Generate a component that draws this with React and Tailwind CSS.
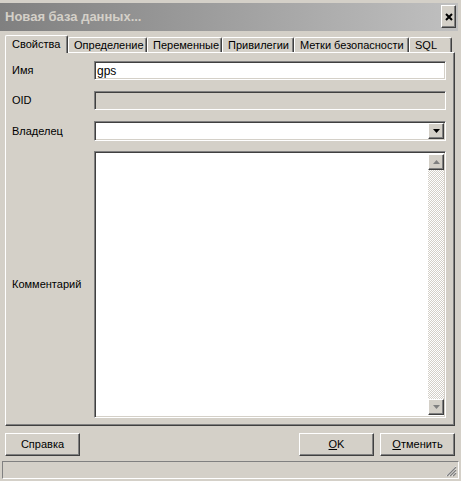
import React from 'react';

const raised =
  'border border-t-white border-l-white border-r-[#404040] border-b-[#404040] shadow-[inset_-1px_-1px_0_#808080]';
const sunken =
  'border border-t-[#808080] border-l-[#808080] border-r-white border-b-white shadow-[inset_1px_1px_0_#404040,inset_-1px_-1px_0_#d4d0c8]';

const tabs = [
  { label: 'Свойства', w: 'w-[63px]', active: true },
  { label: 'Определение', w: 'w-[79px]' },
  { label: 'Переменные', w: 'w-[75px]' },
  { label: 'Привилегии', w: 'w-[72px]' },
  { label: 'Метки безопасности', w: 'w-[115px]' },
  { label: 'SQL', w: 'w-[43px]' },
];

function Tab({ label, w, active }) {
  if (active) {
    return (
      <div
        className={`${w} h-[18px] -mb-px relative z-10 bg-[#d4d0c8] rounded-tl-[2px] rounded-tr-[2px] border-t border-l border-t-white border-l-white border-r border-r-[#404040] shadow-[inset_-1px_0_0_#808080] flex items-center pl-[6px] pb-[1px]`}
      >
        {label}
      </div>
    );
  }
  return (
    <div
      className={`${w} h-[15px] rounded-tl-[2px] rounded-tr-[2px] border-t border-l border-t-white border-l-white border-r border-r-[#404040] shadow-[inset_-1px_0_0_#808080] flex items-center pl-[5px]`}
    >
      {label}
    </div>
  );
}

function Arrow({ up, color }) {
  return (
    <svg width="7" height="4" viewBox="0 0 7 4">
      {up ? (
        <path d="M3.5 0 L7 4 L0 4 Z" fill={color} />
      ) : (
        <path d="M0 0 L7 0 L3.5 4 Z" fill={color} />
      )}
    </svg>
  );
}

function Row({ label, children, className = '' }) {
  return (
    <div className={`flex items-center ${className}`}>
      <div className="w-[88px] pl-[6px]">{label}</div>
      {children}
    </div>
  );
}

export default function App() {
  return (
    <div className="w-[461px] h-[481px] bg-[#d4d0c8] flex flex-col pt-[3px] text-[11px] text-black font-['Liberation_Sans',Arial,sans-serif] overflow-hidden select-none">
      {/* caption */}
      <div className="h-[28px] mr-[3px] flex items-start bg-gradient-to-r from-[#808080] to-[#c0c0c0] pl-[5px] pr-[2px]">
        <span className="mt-[7px] text-[13px] font-bold text-[#d4d0c8] leading-none">Новая база данных...</span>
        <button className={`ml-auto mt-[2px] w-[15px] h-[23px] bg-[#d4d0c8] ${raised} flex items-center justify-center`}>
          <svg width="8" height="8" viewBox="0 0 8 8">
            <path d="M1 1 L7 7 M7 1 L1 7" stroke="#000" strokeWidth="2" />
          </svg>
        </button>
      </div>

      {/* tabs */}
      <div className="mt-[4px] pl-[5px] flex items-end h-[17px]">
        {tabs.map((t) => (
          <Tab key={t.label} {...t} />
        ))}
      </div>

      {/* panel */}
      <div className="ml-[5px] w-[450px] h-[374px] border border-t-white border-l-white border-r-[#404040] border-b-[#404040] shadow-[inset_-1px_-1px_0_#808080] flex flex-col pt-[8px] pb-[7px]">
        <Row label="Имя">
          <div className={`w-[352px] h-[19px] bg-white ${sunken} flex items-center pl-[2px] text-[12px]`}>gps</div>
        </Row>
        <Row label="OID" className="mt-[11px]">
          <div className={`w-[352px] h-[19px] bg-[#d4d0c8] ${sunken}`} />
        </Row>
        <Row label="Владелец" className="mt-[11px]">
          <div className={`w-[352px] h-[20px] bg-white ${sunken} flex justify-end p-[1px] pr-[1px]`}>
            <div className={`w-[16px] h-full bg-[#d4d0c8] ${raised} flex items-center justify-center`}>
              <Arrow color="#000" />
            </div>
          </div>
        </Row>
        <Row label="Комментарий" className="mt-[10px] flex-1">
          <div className={`w-[352px] h-full bg-white ${sunken} flex justify-end p-[2px] pr-[1px]`}>
            <div className="w-[16px] h-full flex flex-col">
              <div className={`h-[16px] bg-[#d4d0c8] ${raised} flex items-center justify-center`}>
                <Arrow up color="#808080" />
              </div>
              <div className="flex-1 bg-[repeating-conic-gradient(#d4d0c8_0_25%,#ffffff_0_50%)] bg-[length:2px_2px]" />
              <div className={`h-[16px] bg-[#d4d0c8] ${raised} flex items-center justify-center`}>
                <Arrow color="#808080" />
              </div>
            </div>
          </div>
        </Row>
      </div>

      {/* buttons */}
      <div className="mt-[7px] flex px-[5px] h-[23px]">
        <button className={`w-[75px] h-full bg-[#d4d0c8] ${raised} flex items-center justify-center`}>Справка</button>
        <div className="ml-auto flex gap-[6px] pr-[1px]">
          <button className={`w-[75px] h-full bg-[#d4d0c8] ${raised} flex items-center justify-center`}>
            <span>
              <span className="underline">O</span>K
            </span>
          </button>
          <button className={`w-[75px] h-full bg-[#d4d0c8] ${raised} flex items-center justify-center`}>
            <span>
              <span className="underline">О</span>тменить
            </span>
          </button>
        </div>
      </div>

      {/* status bar */}
      <div className="mt-[5px] mx-[2px] h-[18px] border border-t-[#808080] border-l-[#808080] border-r-white border-b-white flex justify-end items-end">
        <svg width="12" height="12" viewBox="0 0 12 12" className="mb-[1px] mr-[1px]">
          <path d="M11 1 L1 11 M11 4 L4 11 M11 7 L7 11" stroke="#ffffff" strokeWidth="1" />
          <path d="M11 2 L2 11 M11 5 L5 11 M11 8 L8 11" stroke="#808080" strokeWidth="1.4" />
        </svg>
      </div>
    </div>
  );
}
